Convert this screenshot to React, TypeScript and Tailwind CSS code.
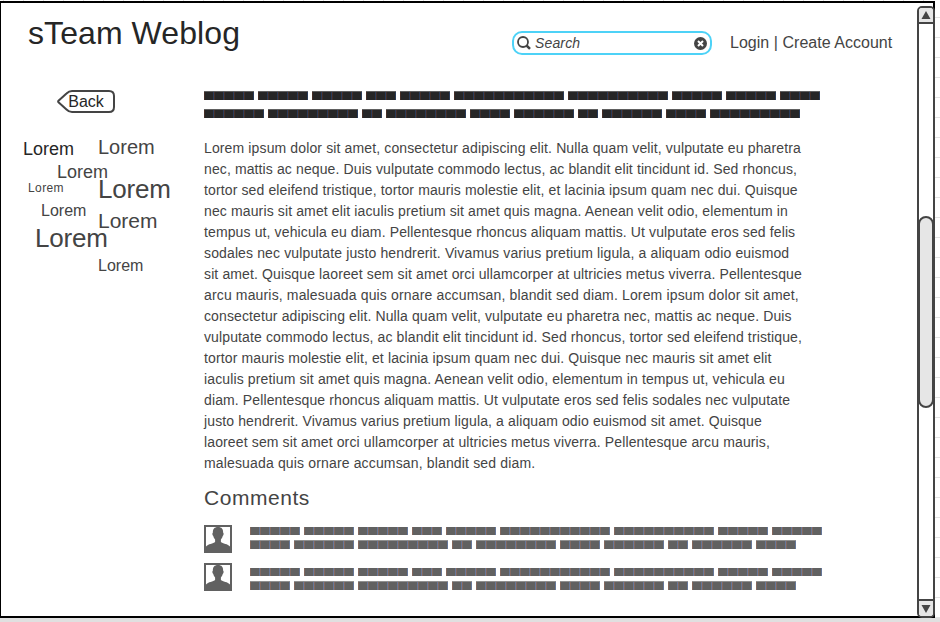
const headline = [
  [5, 5, 5, 3, 5, 11, 10, 5, 5, 4],
  [6, 9, 2, 8, 4, 6, 2, 6, 4, 9],
];
const commentLines = [
  [5, 5, 5, 3, 5, 11, 10, 5, 5],
  [4, 6, 9, 2, 8, 4, 6, 2, 6, 4],
];

/* Each line of the article with the extra width, in pixels, spread over its letters. */
const article: [string, number][] = [
  ["Lorem ipsum dolor sit amet, consectetur adipiscing elit. Nulla quam velit, vulputate eu pharetra", 12.5],
  ["nec, mattis ac neque. Duis vulputate commodo lectus, ac blandit elit tincidunt id. Sed rhoncus,", 11],
  ["tortor sed eleifend tristique, tortor mauris molestie elit, et lacinia ipsum quam nec dui. Quisque", 12.5],
  ["nec mauris sit amet elit iaculis pretium sit amet quis magna. Aenean velit odio, elementum in", 12],
  ["tempus ut, vehicula eu diam. Pellentesque rhoncus aliquam mattis. Ut vulputate eros sed felis", 11.5],
  ["sodales nec vulputate justo hendrerit. Vivamus varius pretium ligula, a aliquam odio euismod", 12],
  ["sit amet. Quisque laoreet sem sit amet orci ullamcorper at ultricies metus viverra. Pellentesque", 12],
  ["arcu mauris, malesuada quis ornare accumsan, blandit sed diam. Lorem ipsum dolor sit amet,", 13.5],
  ["consectetur adipiscing elit. Nulla quam velit, vulputate eu pharetra nec, mattis ac neque. Duis", 11],
  ["vulputate commodo lectus, ac blandit elit tincidunt id. Sed rhoncus, tortor sed eleifend tristique,", 12],
  ["tortor mauris molestie elit, et lacinia ipsum quam nec dui. Quisque nec mauris sit amet elit", 12],
  ["iaculis pretium sit amet quis magna. Aenean velit odio, elementum in tempus ut, vehicula eu", 12],
  ["diam. Pellentesque rhoncus aliquam mattis. Ut vulputate eros sed felis sodales nec vulputate", 11],
  ["justo hendrerit. Vivamus varius pretium ligula, a aliquam odio euismod sit amet. Quisque", 11],
  ["laoreet sem sit amet orci ullamcorper at ultricies metus viverra. Pellentesque arcu mauris,", 12],
  ["malesuada quis ornare accumsan, blandit sed diam.", 7.5],
];

const tags = [
  "left-[22px] top-[6px] text-[18px] text-[#262626]",
  "left-[97px] top-[3px] text-[20px]",
  "left-[56px] top-[29px] text-[18px]",
  "left-[27px] top-[49px] text-[12px] tracking-[0.4px]",
  "left-[97px] top-[42px] text-[26px] tracking-[-0.2px]",
  "left-[40px] top-[69px] text-[16px]",
  "left-[97px] top-[76px] text-[21px]",
  "left-[34px] top-[91px] text-[26px] tracking-[-0.2px]",
  "left-[97px] top-[124px] text-[16px]",
];

/* A row of placeholder words; each number is a word's length in characters. */
function Words({ words, tone }: { words: number[]; tone: string }) {
  return (
    <div className="flex gap-1">
      {words.map((n, i) => (
        <span key={i} className={`block ${tone}`} style={{ width: n * 10 }} />
      ))}
    </div>
  );
}

const darkWord =
  "h-[9px] border-t border-[#606060] bg-[repeating-linear-gradient(90deg,#452e26_0_1px,#262626_1px_9px,#283a58_9px_10px)]";
const greyWord =
  "h-[8px] bg-[repeating-linear-gradient(90deg,#85685d_0_1px,#616161_1px_9px,#65779a_9px_10px)]";
const greyWordTall =
  "h-[9px] border-t border-[#909090] bg-[repeating-linear-gradient(90deg,#85685d_0_1px,#616161_1px_9px,#65779a_9px_10px)]";

function Comment({ textOffset }: { textOffset: string }) {
  return (
    <div className="flex h-7 gap-[18px]">
      <svg width="28" height="28" viewBox="0 0 28 28" className="shrink-0">
        <path fill="#616161" d="M0 0h28v28H0z" />
        <path fill="#fff" d="M2 2h24v24H2z" />
        <path
          fill="#616161"
          d="M14 2C17.600 2 19.300 4.200 19.100 7.500C20 8 19.700 10.500 18.700 11C18.300 12.700 17.700 13.700 16.900 14.500V17C18.500 18.500 24 19 26 21.500V26H2V21.500C4 19 9.500 18.500 11.100 17V14.500C10.300 13.700 9.700 12.700 9.300 11C8.300 10.500 8 8 8.900 7.500C8.700 4.200 10.400 2 14 2Z"
        />
      </svg>
      <div className={`flex flex-col gap-[5px] ${textOffset}`}>
        <Words words={commentLines[0]} tone={greyWord} />
        <Words words={commentLines[1]} tone={greyWordTall} />
      </div>
    </div>
  );
}

function Scrollbar() {
  return (
    <div className="absolute left-[917px] top-[6px] flex h-[612px] w-[18px] flex-col rounded-[5px] border-2 border-[#444] bg-white">
      <div className="flex h-4 shrink-0 items-center justify-center rounded-t-[3px] border-b-2 border-[#444] bg-[#e6e6e6]">
        <svg width="10" height="8" viewBox="0 0 10 8"><path d="M5 0l4.500 8h-9z" fill="#444" /></svg>
      </div>
      <div className="-mx-px mt-[192px] h-[192px] shrink-0 rounded-[8px] border-2 border-[#444] bg-[#e6e6e6]" />
      <div className="mt-auto flex h-[17px] shrink-0 items-center justify-center rounded-b-[3px] border-t-2 border-[#444] bg-[#e6e6e6]">
        <svg width="10" height="8" viewBox="0 0 10 8"><path d="M5 8L.5 0h9z" fill="#444" /></svg>
      </div>
    </div>
  );
}

export default function App() {
  return (
    <div className="relative flex h-[622px] w-[940px] flex-col overflow-hidden bg-white font-['Liberation_Sans',Arial,sans-serif] text-[#444]">
      <div className="h-px w-full bg-[repeating-linear-gradient(90deg,#fff_0_3px,#ddd_3px_4px,#fff_4px_20px)]" />
      <div className="flex h-[617px]">
        <div className="w-[935px] border-2 border-l border-black bg-white">
          <header className="flex h-[75px] items-start">
            <h1 className="ml-[27px] mt-[11px] w-[484px] whitespace-nowrap text-[32px] leading-[38px] tracking-[0.080px] text-[#262626]">sTeam Weblog</h1>
            <div className="mt-[28px] flex h-6 w-[200px] items-center rounded-[10px] border-2 border-[#4dd2f7] px-[3px]">
              <svg width="14" height="14" viewBox="0 0 14 14" fill="none" stroke="#444">
                <circle cx="6" cy="6" r="5" strokeWidth="1.800" />
                <path d="M9.500 9.500l3.500 3.300" strokeWidth="2.500" />
              </svg>
              <span className="ml-1 text-[14px] italic leading-5 tracking-[0.150px]">Search</span>
              <svg className="ml-auto" width="13" height="13" viewBox="0 0 13 13">
                <circle cx="6.500" cy="6.500" r="6.500" fill="#444" />
                <path d="M4 4l5 5M9 4l-5 5" stroke="#fff" strokeWidth="2" />
              </svg>
            </div>
            <p className="ml-[18px] mt-[30px] whitespace-nowrap text-[16px] leading-5 tracking-[0.030px]">Login | Create Account</p>
          </header>
          <div className="flex">
            <aside className="w-[203px] shrink-0 pt-3">
              <button className="relative ml-[56px] block h-[23px] w-[58px] text-[16px] leading-[22px] text-[#262626]">
                <svg className="absolute inset-0" width="58" height="23" viewBox="0 0 58 23" fill="none" stroke="#444" strokeWidth="2">
                  <path d="M15 1H52Q57 1 57 6V17Q57 22 52 22H15Q12 22 9.500 19.500L1.500 12.300Q.8 11.500 1.500 10.700L9.500 3.500Q12 1 15 1Z" />
                </svg>
                <span className="relative">Back</span>
              </button>
              <div className="relative mt-[20px] h-[150px]">
                {tags.map((tag) => (
                  <span key={tag} className={`absolute leading-[1.150] ${tag}`}>Lorem</span>
                ))}
              </div>
            </aside>
            <main className="pt-[13px]">
              <div className="flex flex-col gap-[9px]">
                {headline.map((words, i) => (
                  <Words key={i} words={words} tone={darkWord} />
                ))}
              </div>
              <div className="mt-5 whitespace-nowrap text-[14px] leading-[21px]">
                {article.map(([line, extra], i) => (
                  <p key={i} style={{ letterSpacing: extra / line.length }}>{line}</p>
                ))}
              </div>
              <h2 className="mt-[11px] text-[21px] leading-[26px] tracking-[0.550px]">Comments</h2>
              <div className="mt-[14px] flex flex-col gap-[10px]">
                <Comment textOffset="pt-0.5" />
                <Comment textOffset="pt-[5px]" />
              </div>
            </main>
          </div>
        </div>
        <div className="grow bg-[repeating-linear-gradient(180deg,#fff_0_16px,#e4e4e4_16px_17px,#fff_17px_20px)]" />
      </div>
      <div className="h-1 bg-[#e0e0e0]" />
      <Scrollbar />
    </div>
  );
}
